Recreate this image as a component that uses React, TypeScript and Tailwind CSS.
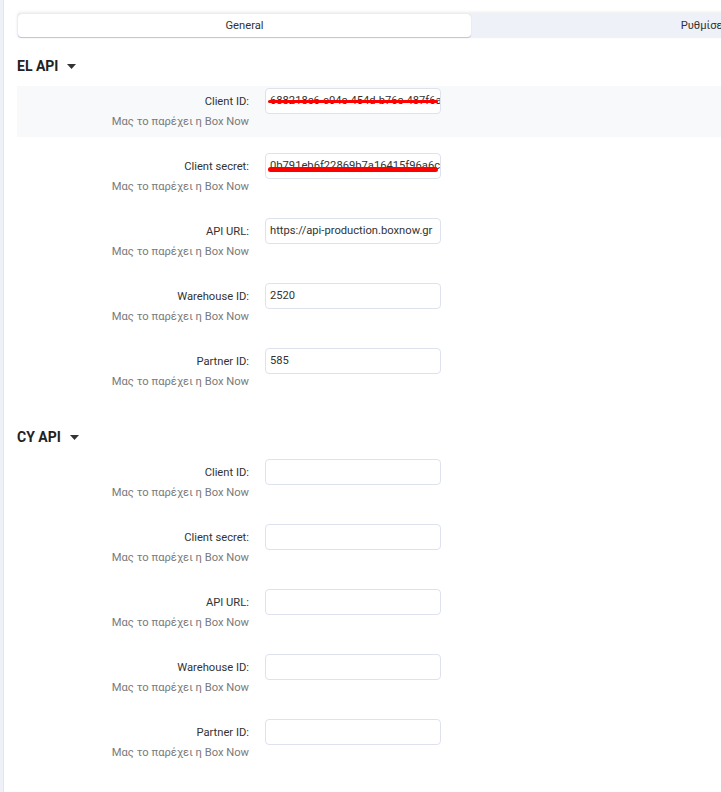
import React from "react";

type Field = { label: string; value?: string; redact?: "thin" | "thick" };

const elFields: Field[] = [
  { label: "Client ID:", value: "688218c6-e04c-454d-b76c-487f6a2", redact: "thin" },
  { label: "Client secret:", value: "0b791eb6f22869b7a16415f96a6c1", redact: "thick" },
  { label: "API URL:", value: "https://api-production.boxnow.gr" },
  { label: "Warehouse ID:", value: "2520" },
  { label: "Partner ID:", value: "585" },
];

const cyFields: Field[] = [
  { label: "Client ID:" },
  { label: "Client secret:" },
  { label: "API URL:" },
  { label: "Warehouse ID:" },
  { label: "Partner ID:" },
];

function Row({ f, hover }: { f: Field; hover?: boolean }) {
  return (
    <div
      className={`flex h-[51px] pt-[2px] mb-[14px] w-[704px] ${hover ? "bg-[#f8f9fa]" : ""}`}
    >
      <div className="w-[232px] flex flex-col items-end">
        <div className="h-[26px] pt-[2px] flex items-center text-[11.2px] text-[#333]">{f.label}</div>
        <div className="text-[11.2px] leading-[14px] pt-[1px] text-[#7a7a7a]">Μας το παρέχει η Box Now</div>
      </div>
      <div className="ml-[16px] relative w-[176px] h-[26px] rounded-[4px] border border-[#dde2ec] bg-white overflow-hidden flex items-center pl-[4px] pt-[1px]">
        <span className="text-[11.2px] text-[#333] whitespace-nowrap">{f.value ?? ""}</span>
        {f.redact === "thin" && (
          <span className="absolute left-[2px] right-[2px] top-[11px] h-[3px] bg-[#f00] rounded-full" />
        )}
        {f.redact === "thick" && (
          <span className="absolute left-[2px] right-[2px] top-[13px] h-[5px] bg-[#f00] rounded-full" />
        )}
      </div>
    </div>
  );
}

function Header({ title }: { title: string }) {
  return (
    <div className="flex items-center h-[20px] text-[14px] font-bold text-[#222]">
      <span>{title}</span>
      <svg className="ml-[9px]" width="9" height="5" viewBox="0 0 9 5">
        <path d="M0 0 L9 0 L4.5 5 Z" fill="#333" />
      </svg>
    </div>
  );
}

export default function App() {
  return (
    <div
      className="flex w-[721px] h-[792px] overflow-hidden bg-white"
      style={{ fontFamily: "Roboto, 'Noto Sans', sans-serif" }}
    >
      <div className="w-[4px] shrink-0 bg-[#eef1f8] border-r border-[#e2e6f0]" />
      <div className="pl-[13px] pt-[13px] shrink-0">
        <div className="flex w-[990px] h-[25px] bg-[#eef1f7] shadow-[0_-1px_3px_rgba(0,0,0,0.08)] rounded-[4px]">
          <div className="w-[453px] ml-[1px] mt-[1px] h-[24px] pt-[2px] bg-white rounded-[4px] border-b border-[#b9c8ec] shadow-[0_0_1px_rgba(0,0,0,0.2)] flex items-center justify-center text-[11.2px] text-[#333]">
            General
          </div>
          <div className="w-[530px] pt-[2px] flex items-center justify-center text-[11.2px] text-[#333]">
            Ρυθμίσεις αποστολής
          </div>
        </div>
        <div className="mt-[18px]">
          <Header title="EL API" />
        </div>
        <div className="mt-[10px]">
          {elFields.map((f, i) => (
            <Row key={i} f={f} hover={i === 0} />
          ))}
        </div>
        <div className="mt-[30px]">
          <Header title="CY API" />
        </div>
        <div className="mt-[10px]">
          {cyFields.map((f, i) => (
            <Row key={i} f={f} />
          ))}
        </div>
      </div>
    </div>
  );
}
